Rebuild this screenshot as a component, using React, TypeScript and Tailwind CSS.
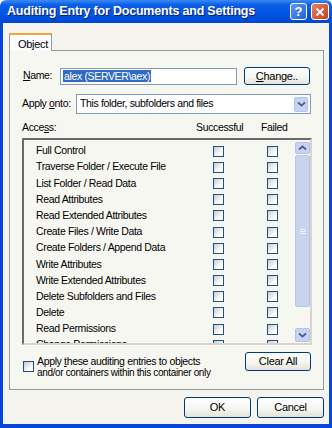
import React from 'react'

const font = { fontFamily: '"Liberation Sans", Arial, sans-serif' }

const rows = [
  'Full Control',
  'Traverse Folder / Execute File',
  'List Folder / Read Data',
  'Read Attributes',
  'Read Extended Attributes',
  'Create Files / Write Data',
  'Create Folders / Append Data',
  'Write Attributes',
  'Write Extended Attributes',
  'Delete Subfolders and Files',
  'Delete',
  'Read Permissions',
  'Change Permissions',
]

const Check = () => (
  <span className="block w-[11px] h-[11px] border border-[#1c5180] bg-[linear-gradient(135deg,#c9cad6_0%,#e6e6ec_40%,#ffffff_70%)]" />
)

const XpButton = ({ children, className = '' }: { children: React.ReactNode; className?: string }) => (
  <div
    className={`flex items-center justify-center rounded-[3px] border border-[#003c74] bg-[linear-gradient(180deg,#ffffff_0%,#f4f4f0_60%,#e3e2da_100%)] text-[11px] text-black tracking-[-0.3px] ${className}`}
  >
    {children}
  </div>
)

const Chevron = ({ up = false }: { up?: boolean }) => (
  <svg width="9" height="6" viewBox="0 0 9 6" className={up ? 'rotate-180' : ''}>
    <path d="M1 1.5 L4.5 4.5 L8 1.5" stroke="#4d6185" strokeWidth="1.8" fill="none" />
  </svg>
)

export default function App() {
  return (
    <div className="w-[332px] h-[428px] flex flex-col select-none" style={font}>
      {/* title bar */}
      <div className="h-[23px] shrink-0 flex items-center pl-[7px] pr-[3px] rounded-t-[6px] bg-[linear-gradient(180deg,#3c8cf7_0%,#0d5fe8_20%,#0054e3_60%,#0048d0_100%)]">
        <span className="flex-1 text-white font-bold text-[12.5px] tracking-[-0.2px] [text-shadow:1px_1px_0_#0a1f6e]">
          Auditing Entry for Documents and Settings
        </span>
        <div className="flex gap-[4px]">
          <div className="w-[17px] h-[17px] rounded-[3px] border border-white bg-[linear-gradient(135deg,#5f97f5,#2360d9)] flex items-center justify-center text-white font-bold text-[13px] leading-none">
            ?
          </div>
          <div className="w-[18px] h-[17px] rounded-[3px] border border-white bg-[linear-gradient(135deg,#e98063,#c8401b)] flex items-center justify-center">
            <svg width="10" height="10" viewBox="0 0 10 10">
              <path d="M1.5 1.5 L8.5 8.5 M8.5 1.5 L1.5 8.5" stroke="#fff" strokeWidth="1.8" />
            </svg>
          </div>
        </div>
      </div>

      {/* body */}
      <div className="flex-1 flex flex-col bg-[#f5f4ee] border-l-[3px] border-r-[3px] border-b-[4px] border-[#0846d8] pl-[6px] pr-[5px] pt-[10px]">
        {/* tab strip */}
        <div className="flex h-[17px]">
          <div className="w-[43px] h-[18px] border-t-[2px] border-t-[#f0a53a] border-l border-r border-[#919b9c] bg-[#fcfcfe] text-[11px] pl-[8px] pt-[1px] tracking-[-0.3px] z-10">
            Object
          </div>
        </div>

        {/* tab panel */}
        <div className="w-[315px] h-[340px] border border-[#919b9c] bg-[#f7f7f2] flex flex-col pl-[13px] text-[10.5px] tracking-[-0.35px] text-black">
          {/* name */}
          <div className="flex items-center mt-[16px] h-[18px]">
            <span className="w-[37px]">
              <u>N</u>ame:
            </span>
            <div className="w-[177px] h-[17px] border border-[#7f9db9] bg-white flex items-center pl-[2px]">
              <span className="bg-[#316ac5] text-white px-[1px] leading-[12px]">alex (SERVER\aex)</span>
            </div>
            <XpButton className="ml-[7px] w-[66px] h-[18px]">
              <span>
                <u>C</u>hange..
              </span>
            </XpButton>
          </div>

          {/* apply onto */}
          <div className="flex items-center mt-[9px] h-[20px]">
            <span className="w-[54px] -ml-[1px]">
              Apply <u>o</u>nto:
            </span>
            <div className="w-[235px] h-[20px] border border-[#7f9db9] bg-white flex items-center pl-[3px]">
              <span className="flex-1">This folder, subfolders and files</span>
              <div className="w-[14px] h-[15px] mr-[2px] rounded-[2px] border border-[#b1c3ec] bg-[#c6d3f5] flex items-center justify-center">
                <Chevron />
              </div>
            </div>
          </div>

          {/* access header */}
          <div className="flex h-[13px] mt-[7px] -ml-[1px] items-center">
            <span className="w-[174px]">
              Acce<u>s</u>s:
            </span>
            <span className="w-[65px]">Successful</span>
            <span>Failed</span>
          </div>

          {/* list */}
          <div className="mt-[4px] -ml-[1px] w-[290px] h-[207px] border-2 border-[#6b6b6b] border-r-[#d8d6cc] border-b-[#d8d6cc] bg-[#f7f7f2] flex overflow-hidden">
            <div className="flex-1 pt-[3px] pl-[12px]">
              {rows.map((r) => (
                <div key={r} className="h-[16.2px] flex items-center">
                  <span className="w-[177px]">{r}</span>
                  <span className="w-[54px]">
                    <Check />
                  </span>
                  <Check />
                </div>
              ))}
            </div>
            <div className="w-[15px] flex flex-col pt-[2px] pb-[1px]">
              <div className="h-[12px] rounded-[2px] border border-[#b1c3ec] bg-[#c6d3f5] flex items-center justify-center">
                <Chevron up />
              </div>
              <div className="mt-[1px] h-[152px] rounded-[2px] border border-[#b6c7ee] bg-[#c8d3ee] flex items-center justify-center">
                <div className="flex flex-col gap-[1px]">
                  <span className="block w-[6px] h-[1px] bg-[#eef2fc]" />
                  <span className="block w-[6px] h-[1px] bg-[#eef2fc]" />
                  <span className="block w-[6px] h-[1px] bg-[#eef2fc]" />
                </div>
              </div>
              <div className="flex-1" />
              <div className="h-[14px] rounded-[2px] border border-[#b1c3ec] bg-[#c6d3f5] flex items-center justify-center">
                <Chevron />
              </div>
            </div>
          </div>

          {/* apply checkbox + clear all */}
          <div className="flex mt-[7px]">
            <div className="flex w-[222px]">
              <span className="mt-[9px]">
                <Check />
              </span>
              <div className="ml-[3px] leading-[12px] pt-[3px]">
                <div>
                  Apply <u>t</u>hese auditing entries to objects
                </div>
                <div className="text-[10px]">and/or containers within this container only</div>
              </div>
            </div>
            <XpButton className="w-[66px] h-[19px]">Clear All</XpButton>
          </div>
        </div>

        {/* ok / cancel */}
        <div className="flex justify-end gap-[6px] mt-[7px]">
          <XpButton className="w-[67px] h-[21px]">OK</XpButton>
          <XpButton className="w-[67px] h-[21px]">Cancel</XpButton>
        </div>
      </div>
    </div>
  )
}
